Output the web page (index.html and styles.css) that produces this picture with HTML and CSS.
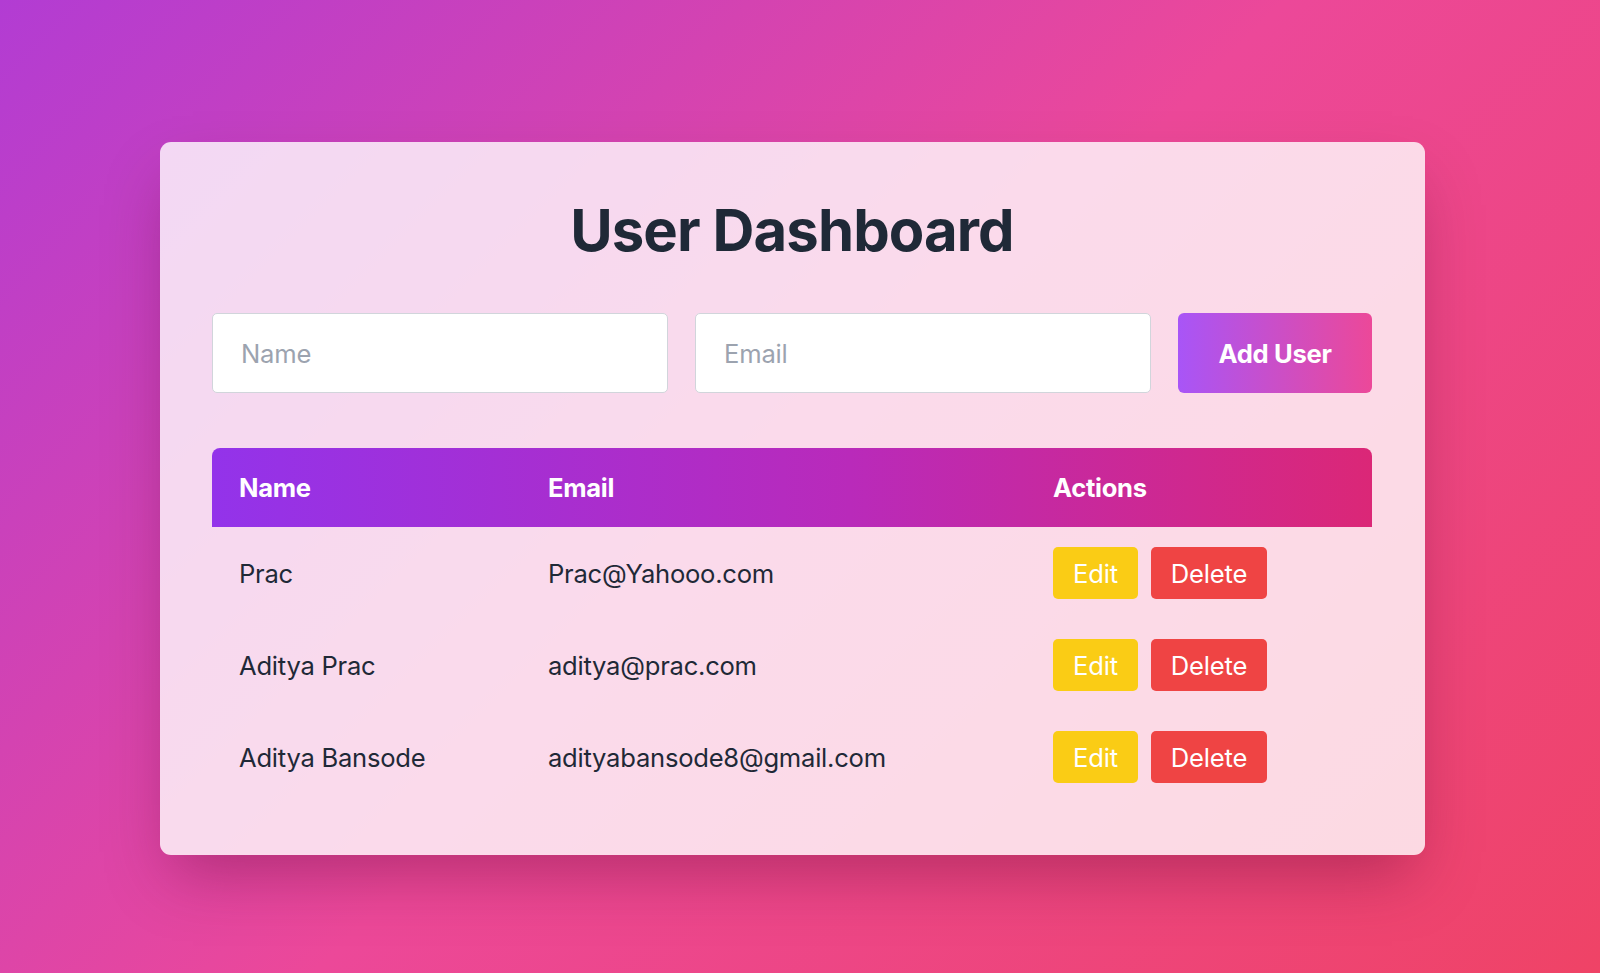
FILE: index.html
```html
<!DOCTYPE html>
<html lang="en">
<head>
<meta charset="utf-8">
<title>User Dashboard</title>
<link rel="stylesheet" href="styles.css">
</head>
<body>
<div class="page">
  <main class="card">
    <h1 class="title">User Dashboard</h1>
    <form class="add-form">
      <input class="field" type="text" placeholder="Name">
      <input class="field" type="email" placeholder="Email">
      <button class="add-btn" type="button">Add User</button>
    </form>
    <table class="users">
      <thead>
        <tr>
          <th class="col-name">Name</th>
          <th class="col-email">Email</th>
          <th class="col-actions">Actions</th>
        </tr>
      </thead>
      <tbody>
        <tr>
          <td>Prac</td>
          <td>Prac@Yahooo.com</td>
          <td><div class="actions"><button class="btn btn-edit" type="button">Edit</button><button class="btn btn-delete" type="button">Delete</button></div></td>
        </tr>
        <tr>
          <td>Aditya Prac</td>
          <td>aditya@prac.com</td>
          <td><div class="actions"><button class="btn btn-edit" type="button">Edit</button><button class="btn btn-delete" type="button">Delete</button></div></td>
        </tr>
        <tr>
          <td>Aditya Bansode</td>
          <td>adityabansode8@gmail.com</td>
          <td><div class="actions"><button class="btn btn-edit" type="button">Edit</button><button class="btn btn-delete" type="button">Delete</button></div></td>
        </tr>
      </tbody>
    </table>
  </main>
</div>
</body>
</html>
```
FILE: styles.css
```css
* { box-sizing: border-box; }

html, body {
  margin: 0;
  height: 100%;
}

body {
  font-family: Inter, "Noto Sans", "Liberation Sans", sans-serif;
  background: linear-gradient(135deg, #b23cd3 0%, #ec4899 50%, #ef4366 100%);
  color: #1f2937;
  overflow: hidden;
}

.page {
  display: flex;
  justify-content: center;
  padding: 142px 15px 0 0;
}

.card {
  width: 1265px;
  padding: 52px 53px 52px 52px;
  background: rgba(255, 255, 255, 0.8);
  border-radius: 11px;
  box-shadow: 0 30px 60px -12px rgba(80, 0, 40, 0.35);
}

.title {
  margin: 0;
  text-align: center;
  font-size: 58px;
  line-height: 72px;
  font-weight: 700;
  color: #1f2937;
  letter-spacing: -0.9px;
}

.add-form {
  display: flex;
  gap: 27px;
  margin-top: 47px;
  height: 80px;
}

.field {
  flex: 1;
  min-width: 0;
  height: 80px;
  border: 1px solid #d1d5db;
  border-radius: 5px;
  background: #fff;
  padding: 0 28px;
  font-family: inherit;
  font-size: 25.6px;
  letter-spacing: -0.2px;
  color: #1f2937;
  outline: none;
}

.field::placeholder {
  color: #9ca3af;
}

.add-btn {
  width: 194px;
  height: 80px;
  border: 0;
  border-radius: 6px;
  background: linear-gradient(90deg, #a855f7, #ec4899);
  color: #fff;
  font-family: inherit;
  font-size: 25.6px;
  font-weight: 700;
  letter-spacing: -0.3px;
  cursor: pointer;
}

.users {
  width: 100%;
  margin-top: 55px;
  border-collapse: separate;
  border-spacing: 0;
  border-radius: 8px;
  overflow: hidden;
  table-layout: fixed;
}

.users thead tr {
  background: linear-gradient(90deg, #9333ea 0%, #b92aba 55%, #db2777 100%);
}

.users th {
  height: 79px;
  padding: 0 0 0 27px;
  text-align: left;
  color: #fff;
  font-size: 25.6px;
  font-weight: 700;
  letter-spacing: -0.3px;
}

.col-name { width: 309px; }
.col-email { width: 505px; }

.users td {
  height: 92px;
  padding: 0 0 0 27px;
  font-size: 25.6px;
  letter-spacing: -0.25px;
  color: #1f2937;
  vertical-align: middle;
}

.actions {
  display: flex;
  gap: 13px;
  align-items: center;
}

.btn {
  height: 52px;
  border: 0;
  border-radius: 5px;
  padding: 0 20px;
  color: #fff;
  font-family: inherit;
  font-size: 25.6px;
  font-weight: 400;
  letter-spacing: -0.2px;
  cursor: pointer;
}

.btn-edit { background: #facc15; }
.btn-delete { background: #ef4444; }
```
